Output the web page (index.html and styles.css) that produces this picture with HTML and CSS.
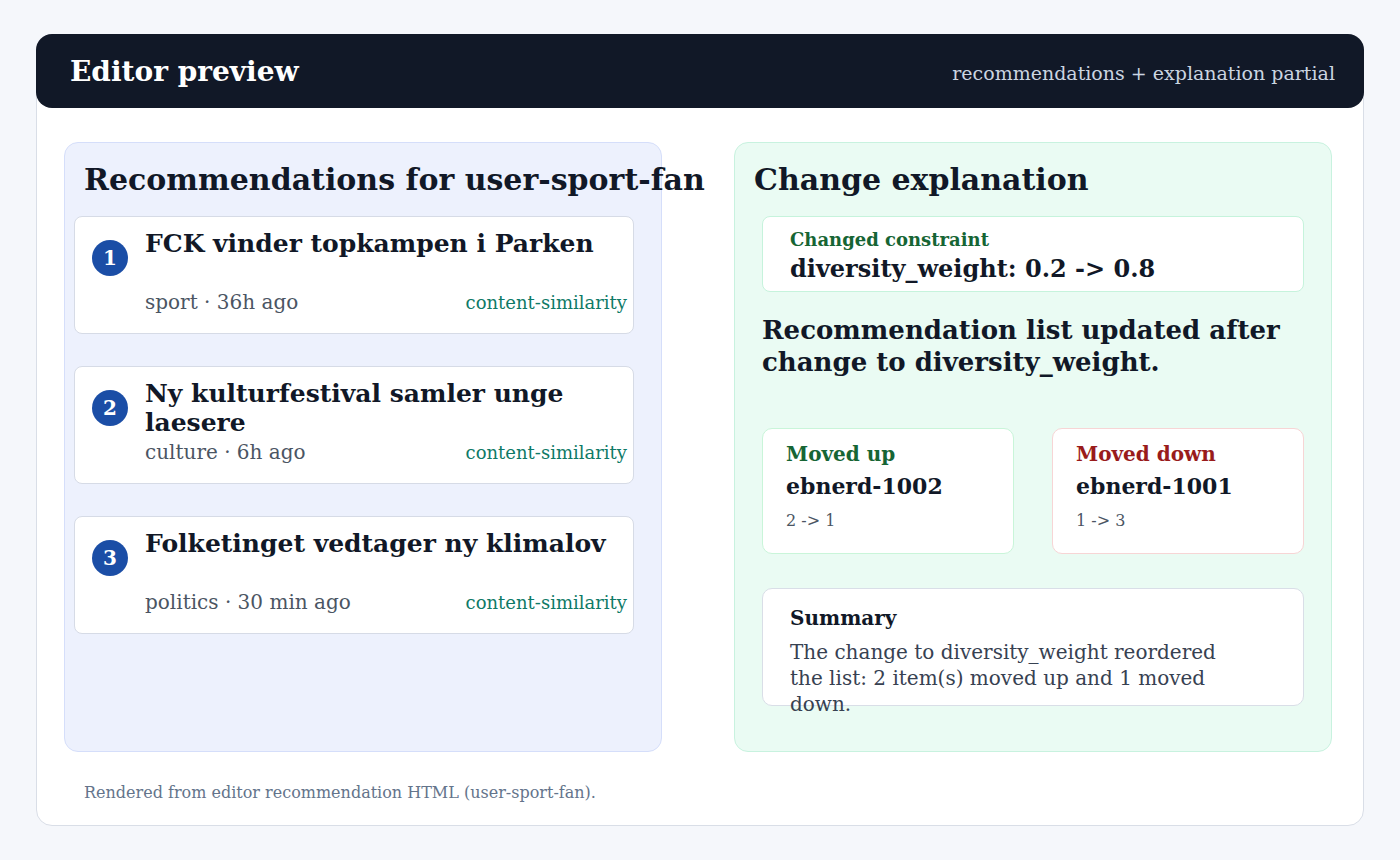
FILE: index.html
```html
<!DOCTYPE html>
<html lang="en">
<head>
    <meta charset="UTF-8">
    <meta name="viewport" content="width=device-width, initial-scale=1.0">
    <title>Editor preview</title>
    <link rel="stylesheet" href="styles.css">
</head>
<body>

    <div class="preview-frame">
        <header class="topbar">
            <h1>Editor preview</h1>
            <span class="topbar-note">recommendations + explanation partial</span>
        </header>

        <div class="panels">
            <!-- Lista de recomendaciones -->
            <section class="panel panel-recs">
                <h2>Recommendations for user-sport-fan</h2>

                <div class="rec-card">
                    <span class="rank">1</span>
                    <div class="rec-body">
                        <h3>FCK vinder topkampen i Parken</h3>
                        <div class="rec-meta">
                            <span>sport · 36h ago</span>
                            <span class="rec-source">content-similarity</span>
                        </div>
                    </div>
                </div>

                <div class="rec-card">
                    <span class="rank">2</span>
                    <div class="rec-body">
                        <h3>Ny kulturfestival samler unge laesere</h3>
                        <div class="rec-meta">
                            <span>culture · 6h ago</span>
                            <span class="rec-source">content-similarity</span>
                        </div>
                    </div>
                </div>

                <div class="rec-card">
                    <span class="rank">3</span>
                    <div class="rec-body">
                        <h3>Folketinget vedtager ny klimalov</h3>
                        <div class="rec-meta">
                            <span>politics · 30 min ago</span>
                            <span class="rec-source">content-similarity</span>
                        </div>
                    </div>
                </div>
            </section>

            <!-- Explicación del cambio -->
            <section class="panel panel-explain">
                <h2>Change explanation</h2>

                <div class="constraint-box">
                    <div class="constraint-label">Changed constraint</div>
                    <div class="constraint-value">diversity_weight: 0.2 -&gt; 0.8</div>
                </div>

                <p class="explain-lead">Recommendation list updated after change to diversity_weight.</p>

                <div class="moves">
                    <div class="move-box move-up">
                        <div class="move-label">Moved up</div>
                        <div class="move-id">ebnerd-1002</div>
                        <div class="move-rank">2 -&gt; 1</div>
                    </div>
                    <div class="move-box move-down">
                        <div class="move-label">Moved down</div>
                        <div class="move-id">ebnerd-1001</div>
                        <div class="move-rank">1 -&gt; 3</div>
                    </div>
                </div>

                <div class="summary-box">
                    <div class="summary-title">Summary</div>
                    <p>The change to diversity_weight reordered the list: 2 item(s) moved up and 1 moved down.</p>
                </div>
            </section>
        </div>

        <footer class="frame-footer">Rendered from editor recommendation HTML (user-sport-fan).</footer>
    </div>

</body>
</html>
```

FILE: styles.css
```css
* {
    box-sizing: border-box;
}
body {
    margin: 0;
    padding: 34px 36px;
    font-family: "DejaVu Serif", serif;
    background-color: #f5f7fb;
    color: #111827;
}
.preview-frame {
    width: 1328px;
    height: 792px;
    background-color: #fff;
    border: 1px solid #d9dee7;
    border-radius: 16px;
}
.topbar {
    height: 74px;
    margin: -1px -1px 0 -1px;
    display: flex;
    justify-content: space-between;
    align-items: center;
    padding: 0 29px 0 34px;
    background-color: #111827;
    border-radius: 16px;
}
.topbar h1 {
    margin: 0;
    font-size: 28px;
    color: #fff;
}
.topbar-note {
    font-size: 19px;
    color: #cbd5e1;
    padding-top: 4px;
}
.panels {
    display: grid;
    grid-template-columns: 598px 598px;
    column-gap: 72px;
    padding: 34px 0 0 27px;
}
.panel {
    height: 610px;
    border-radius: 14px;
    border: 1px solid;
}
.panel h2 {
    margin: 0 0 18px 0;
    font-size: 30px;
    line-height: 36px;
    white-space: nowrap;
}
.panel-recs {
    background-color: #edf1fd;
    border-color: #d5defa;
    padding: 19px 27px 0 9px;
}
.panel-recs h2 {
    padding-left: 10px;
}
.rec-card {
    height: 118px;
    margin-bottom: 32px;
    display: flex;
    background-color: #fff;
    border: 1px solid #d6dbe6;
    border-radius: 8px;
}
.rank {
    flex: none;
    width: 36px;
    height: 36px;
    margin: 23px 17px 0 17px;
    border-radius: 50%;
    background-color: #1b4ea6;
    color: #fff;
    font-weight: bold;
    font-size: 20px;
    display: flex;
    justify-content: center;
    align-items: center;
}
.rec-body {
    flex: 1;
    display: flex;
    flex-direction: column;
    padding: 12px 6px 18px 0;
}
.rec-body h3 {
    margin: 0;
    font-size: 25px;
    line-height: 29px;
}
.rec-meta {
    margin-top: auto;
    display: flex;
    justify-content: space-between;
    align-items: baseline;
    font-size: 20px;
    line-height: 24px;
    color: #4b5563;
}
.rec-source {
    font-size: 18px;
    color: #0f7a67;
}
.panel-explain {
    background-color: #eafbf3;
    border-color: #c8f2df;
    padding: 19px 27px 0 27px;
}
.panel-explain h2 {
    margin-left: -8px;
}
.constraint-box {
    height: 76px;
    padding: 12px 27px 0 27px;
    background-color: #fff;
    border: 1px solid #c6f3dc;
    border-radius: 8px;
}
.constraint-label {
    font-size: 18px;
    font-weight: bold;
    line-height: 22px;
    color: #166534;
}
.constraint-value {
    margin-top: 4px;
    font-size: 24px;
    font-weight: bold;
    line-height: 28px;
}
.explain-lead {
    margin: 22px 0 50px 0;
    font-size: 26px;
    font-weight: bold;
    line-height: 32px;
}
.moves {
    display: grid;
    grid-template-columns: 252px 252px;
    column-gap: 38px;
}
.move-box {
    height: 126px;
    padding: 13px 23px 0 23px;
    background-color: #fff;
    border: 1px solid;
    border-radius: 10px;
}
.move-up {
    border-color: #c9f5d9;
}
.move-down {
    border-color: #f7d5d5;
}
.move-label {
    font-size: 20px;
    font-weight: bold;
    line-height: 24px;
}
.move-up .move-label {
    color: #166534;
}
.move-down .move-label {
    color: #991b1b;
}
.move-id {
    margin-top: 6px;
    font-size: 22px;
    font-weight: bold;
    line-height: 28px;
}
.move-rank {
    margin-top: 10px;
    font-size: 16px;
    line-height: 22px;
    color: #4b5563;
}
.summary-box {
    height: 118px;
    margin-top: 34px;
    padding: 17px 27px 0 27px;
    background-color: #fff;
    border: 1px solid #d9dee7;
    border-radius: 10px;
}
.summary-title {
    font-size: 20px;
    font-weight: bold;
    line-height: 24px;
}
.summary-box p {
    margin: 9px 0 0 0;
    max-width: 445px;
    font-size: 20px;
    line-height: 26px;
    color: #374151;
}
.frame-footer {
    padding: 31px 0 0 47px;
    font-size: 16px;
    line-height: 20px;
    color: #64748b;
}
```
